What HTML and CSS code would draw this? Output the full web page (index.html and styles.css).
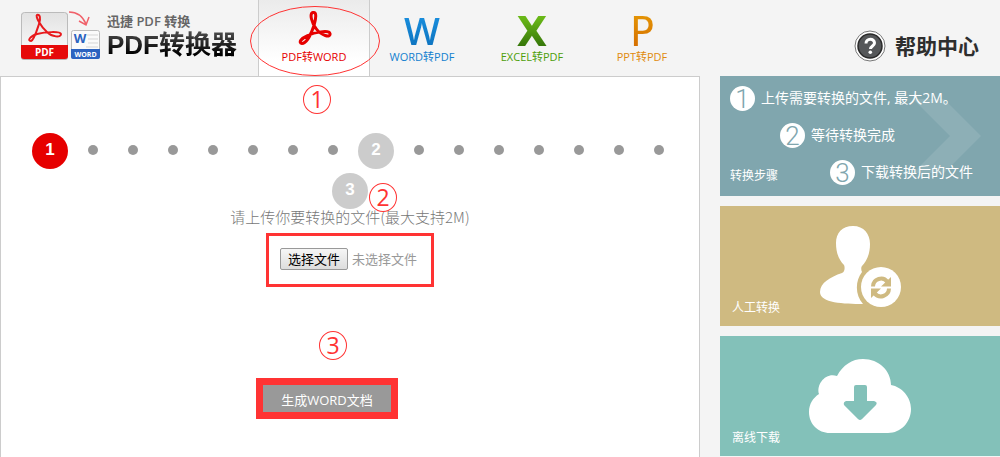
FILE: index.html
```html
<!DOCTYPE html>
<html lang="zh-CN">
<head>
    <meta charset="UTF-8">
    <meta name="viewport" content="width=device-width, initial-scale=1.0">
    <title>PDF转换器</title>
    <link rel="stylesheet" href="styles.css">
</head>
<body>
    <header class="header">
        <a class="logo" href="#">
            <svg class="logo-icon" width="82" height="52" viewBox="0 0 82 52">
                <defs>
                    <linearGradient id="paper" x1="0" y1="0" x2="0" y2="1">
                        <stop offset="0" stop-color="#e2e2e2"/>
                        <stop offset="1" stop-color="#fdfdfd"/>
                    </linearGradient>
                </defs>
                <rect x="1" y="3" width="47" height="47" rx="3" fill="#b5b5b5"/>
                <rect x="1.500" y="2.500" width="46" height="46" rx="3" fill="url(#paper)" stroke="#bbb"/>
                <path d="M1 35h47v11a3 3 0 0 1-3 3H4a3 3 0 0 1-3-3z" fill="#e60a0a"/>
                <path d="M17 5c3-1 4 3 2 9-2 6-5 16-8 17-4 0-1-5 6-7 8-2 23-3 24 0 0 4-9 3-14-2-6-5-12-16-10-17z" fill="none" stroke="#e8191c" stroke-width="2"/>
                <text x="24.500" y="46" class="logo-pdf">PDF</text>
                <path d="M49 2c8 0 14 5 17 12M59 11l7 4 3-8" fill="none" stroke="#f0616a" stroke-width="1.500"/>
                <rect x="51.500" y="20.500" width="28" height="28" rx="2" fill="#fafafa" stroke="#bbb"/>
                <path d="M67 25h11M68 29h10M68 33h10M66 37h12" stroke="#d5d5d5"/>
                <path d="M51 39h29v8a2 2 0 0 1-2 2H53a2 2 0 0 1-2-2z" fill="#2c63c0"/>
                <text x="60" y="33" class="logo-w">W</text>
                <text x="65.500" y="47" class="logo-word">WORD</text>
            </svg>
            <span class="logo-text">
                <span class="logo-small">迅捷 PDF 转换</span>
                <strong class="logo-big">PDF转换器</strong>
            </span>
        </a>
        <nav class="tabs">
            <a class="tab tab-pdf active" href="#">
                <svg class="tab-icon" width="36" height="36" viewBox="0 0 36 36">
                    <path d="M17 2.500c4-1 3 6 1 13-2 6-7 18-12 18-4-1-1-5 6-8 6-3 21-6 22-2 1 5-9 2-14-5-4-5-7-15-3-16z" fill="none" stroke="#e60000" stroke-width="3"/>
                </svg>
                <span>PDF转WORD</span>
            </a>
            <a class="tab tab-word" href="#">
                <span class="tab-letter">W</span>
                <span>WORD转PDF</span>
            </a>
            <a class="tab tab-excel" href="#">
                <span class="tab-letter">X</span>
                <span>EXCEL转PDF</span>
            </a>
            <a class="tab tab-ppt" href="#">
                <span class="tab-letter">P</span>
                <span>PPT转PDF</span>
            </a>
            <svg class="mark mark-tab" width="132" height="72" viewBox="0 0 132 72">
                <ellipse cx="66" cy="36" rx="64.500" ry="34.500"/>
            </svg>
        </nav>
        <a class="help" href="#">
            <svg width="32" height="32" viewBox="0 0 32 32">
                <circle cx="16" cy="16" r="15" fill="#fff" stroke="#777"/>
                <circle cx="16" cy="16" r="12" fill="#555759" stroke="#2a2a2a" stroke-width="1.500"/>
                <path d="M12 13.500c0-5.500 8.500-5.500 8.500-.5 0 3-4 3-4 6" fill="none" stroke="#fff" stroke-width="3"/>
                <circle cx="16.300" cy="22.300" r="1.800" fill="#fff"/>
            </svg>
            <span>帮助中心</span>
        </a>
    </header>

    <div class="content">
        <main class="panel">
            <span class="mark-num mark-one">1</span>
            <span class="mark-num mark-two">2</span>
            <span class="mark-num mark-three">3</span>

            <ol class="steps">
                <li class="step current">1</li>
                <li class="dot"></li>
                <li class="dot"></li>
                <li class="dot"></li>
                <li class="dot"></li>
                <li class="dot"></li>
                <li class="dot"></li>
                <li class="dot"></li>
                <li class="step">2</li>
                <li class="dot"></li>
                <li class="dot"></li>
                <li class="dot"></li>
                <li class="dot"></li>
                <li class="dot"></li>
                <li class="dot"></li>
                <li class="dot"></li>
                <li class="step last">3</li>
            </ol>

            <form class="upload">
                <p class="upload-tip">请上传你要转换的文件(最大支持2M)</p>
                <div class="file-box">
                    <input class="file-input" type="file" id="file">
                    <label class="file-btn" for="file">选择文件</label>
                    <span class="file-name">未选择文件</span>
                </div>
                <div class="actions">
                    <button class="submit" type="submit">生成WORD文档</button>
                </div>
            </form>
        </main>

        <aside class="sidebar">
            <section class="card card-steps">
                <svg class="chevron" width="70" height="74" viewBox="0 0 70 74">
                    <path d="M2 0h31l37 37-37 37H2l37-37z" fill="#fff" fill-opacity=".1"/>
                </svg>
                <ol class="guide">
                    <li><b>1</b>上传需要转换的文件, 最大2M。</li>
                    <li><b>2</b>等待转换完成</li>
                    <li><b>3</b>下载转换后的文件</li>
                </ol>
                <h2 class="card-label">转换步骤</h2>
            </section>
            <a class="card card-manual" href="#">
                <svg class="card-icon" width="82" height="82" viewBox="0 0 82 82">
                    <path d="M34 1c11 0 17 8 17 18 0 11-4 18-8 22-1 1-1 4 0 6-7 9-7 23 1 32C25 79 1 78 1 67c0-9 10-15 22-19 3-1 3-6 2-8-5-5-8-12-8-22C17 8 23 1 34 1z" fill="#fff"/>
                    <circle cx="62" cy="62" r="20" fill="#fff"/>
                    <path d="M54 61.500a8 8 0 0 1 14.500-4.500M70 63.500a8 8 0 0 1-14.500 4.500" fill="none" stroke="#cfba81" stroke-width="4"/>
                    <path d="M72 52v9.500H62zM52 73v-9.500h10z" fill="#cfba81"/>
                </svg>
                <span class="card-label">人工转换</span>
            </a>
            <a class="card card-offline" href="#">
                <svg class="card-icon" width="102" height="74" viewBox="0 0 102 74">
                    <path d="M21 74C9 74 0 65 0 53c0-8 4-14 10-18C7 25 17 13 28 17 34 6 43 0 54 0c16 0 28 12 28 26 11 2 20 12 20 24 0 13-10 24-23 24z" fill="#fff"/>
                    <path d="M47 26h9q2 0 2 2v14h7q4 1 2 4L53 60q-2 2-4 0L35 46q-1-3 2-4h8V28q0-2 2-2z" fill="#83c1b9"/>
                </svg>
                <span class="card-label">离线下载</span>
            </a>
        </aside>
    </div>
</body>
</html>
```

FILE: styles.css
```css
* {
    box-sizing: border-box;
}

body {
    margin: 0;
    min-height: 100vh;
    display: flex;
    flex-direction: column;
    font-family: "Open Sans", "Noto Sans CJK SC", sans-serif;
    background-color: #f4f4f4;
}

a {
    color: inherit;
    text-decoration: none;
}

/* header */
.header {
    display: flex;
    height: 76px;
}

.logo {
    display: flex;
    width: 258px;
    padding: 10px 0 0 20px;
}

.logo-icon {
    flex: none;
}

.logo-icon text {
    font-weight: bold;
    text-anchor: middle;
}

.logo-pdf {
    font-size: 10px;
    fill: #fff;
}

.logo-w {
    font-size: 13px;
    fill: #2c63c0;
}

.logo-word {
    font-size: 7px;
    fill: #fff;
}

.logo-text {
    display: flex;
    flex-direction: column;
    padding: 4px 0 0 5px;
    white-space: nowrap;
}

.logo-small {
    font-size: 13px;
    font-weight: 600;
    line-height: 15px;
    color: #666;
}

.logo-big {
    font-family: "Liberation Sans", "Noto Sans CJK SC", sans-serif;
    font-size: 26px;
    font-weight: bold;
    line-height: 32px;
    color: transparent;
    background: linear-gradient(#555, #000 80%);
    background-clip: text;
    -webkit-background-clip: text;
}

.tabs {
    position: relative;
    display: flex;
}

.tab {
    display: flex;
    flex-direction: column;
    align-items: center;
    width: 110px;
    padding-top: 10px;
    font-size: 11px;
    line-height: 16px;
}

.tab.active {
    width: 112px;
    margin-right: -3px;
    border: 1px solid #ccc;
    border-width: 0 1px;
    background: linear-gradient(#ebebeb, #fff 80%);
}

.tab-icon {
    margin-bottom: 3px;
}

.tab-letter {
    height: 39px;
    font-size: 38px;
    line-height: 40px;
    color: transparent;
    background-clip: text;
    -webkit-background-clip: text;
}

.tab-pdf {
    color: #e60000;
}

.tab-word {
    color: #1380cf;
}

.tab-word .tab-letter {
    font-weight: 600;
    background-image: linear-gradient(#1b93e3, #0d72bd);
}

.tab-excel {
    color: #4d9e09;
}

.tab-excel .tab-letter {
    font-family: "DejaVu Sans", sans-serif;
    font-size: 40px;
    font-weight: bold;
    line-height: 44px;
    background-image: linear-gradient(#69b817 20%, #37780a 90%);
}

.tab-ppt {
    color: #e08a0c;
}

.tab-ppt .tab-letter {
    font-family: "DejaVu Sans", sans-serif;
    font-size: 40px;
    line-height: 44px;
    background-image: linear-gradient(#e69a05, #d46c00);
}

.help {
    display: flex;
    align-items: center;
    gap: 9px;
    margin-left: auto;
    padding: 16px 21px 0 0;
    font-size: 21px;
    font-weight: bold;
    line-height: 28px;
    color: #2e2e2e;
}

/* red pen marks */
.mark {
    position: absolute;
    fill: none;
    stroke: #f33;
}

.mark-tab {
    top: 5px;
    left: -9px;
}

.mark-num {
    position: absolute;
    width: 28px;
    height: 29px;
    border: 1px solid #f33;
    border-radius: 50%;
    font-size: 23px;
    line-height: 27px;
    text-align: center;
    color: #f33;
}

.mark-one {
    top: 8px;
    left: 302px;
}

.mark-two {
    top: 106px;
    left: 368px;
}

.mark-three {
    top: 254px;
    left: 318px;
}

/* content */
.content {
    display: flex;
    flex: 1;
    gap: 20px;
}

.panel {
    position: relative;
    flex: 1;
    padding-top: 54px;
    border: 1px solid #ccc;
    border-bottom: 0;
    background: #fff;
}

.steps {
    display: flex;
    flex-wrap: wrap;
    align-items: center;
    margin: 0;
    padding: 0;
    list-style: none;
}

.step {
    width: 36px;
    height: 36px;
    margin: 2px 5px;
    border-radius: 50%;
    background: #ccc;
    color: #fff;
    font-family: "Liberation Sans", sans-serif;
    font-size: 17px;
    font-weight: bold;
    line-height: 34px;
    text-align: center;
}

.step.current {
    margin-left: 31px;
    background: #e60000;
}

.step.last {
    margin: 2px auto;
}

.dot {
    width: 10px;
    height: 10px;
    margin: 0 15px 3px;
    border-radius: 50%;
    background: #999;
}

.upload {
    display: flex;
    flex-direction: column;
    align-items: center;
    font-family: "Noto Sans CJK SC", sans-serif;
    font-size: 13px;
}

.upload-tip {
    margin: 0 0 10px;
    font-size: 15px;
    font-weight: 300;
    line-height: 12px;
    color: #777;
}

.file-box {
    display: flex;
    align-items: center;
    gap: 4px;
    padding: 12px 14px 14px 11px;
    border: 3px solid #f33;
    color: #999;
}

.file-input {
    position: absolute;
    width: 1px;
    height: 1px;
    opacity: 0;
}

.file-btn {
    padding: 0 7px;
    border: 1px solid #999;
    border-radius: 2px;
    background: linear-gradient(#f6f6f6, #ddd);
    line-height: 20px;
    color: #000;
}

.file-name {
    line-height: 20px;
}

.actions {
    margin-top: 91px;
    padding-right: 46px;
}

.submit {
    width: 142px;
    height: 41px;
    padding: 2px 0 0;
    border: 7px solid #f33;
    background: #999;
    color: #fff;
    font-family: "Open Sans", "Noto Sans CJK SC", sans-serif;
    font-size: 13px;
    line-height: 20px;
}

/* sidebar */
.sidebar {
    display: flex;
    flex-direction: column;
    flex: none;
    gap: 10px;
    width: 280px;
}

.card {
    display: grid;
    height: 120px;
    color: #fff;
}

.card > * {
    grid-area: 1 / 1;
}

.card-steps {
    background: #80a6ae;
}

.card-manual {
    background: #cfba81;
}

.card-offline {
    background: #83c1b9;
}

.card-icon {
    place-self: center;
}

.card-label {
    align-self: end;
    margin: 0;
    padding: 0 0 9px 12px;
    font-size: 12px;
    font-weight: normal;
    line-height: 18px;
}

.card-steps .card-label {
    padding: 0 0 11px 10px;
}

.chevron {
    place-self: center end;
    margin-right: 19px;
}

.guide {
    display: flex;
    flex-direction: column;
    gap: 12px;
    margin: 0;
    padding: 10px 0 0 10px;
    list-style: none;
    font-size: 14px;
    line-height: 24px;
    white-space: nowrap;
}

.guide li {
    display: flex;
    gap: 6px;
    height: 25px;
}

.guide li:nth-child(2) {
    margin-left: 50px;
}

.guide li:nth-child(3) {
    margin-left: 100px;
}

.guide b {
    width: 25px;
    height: 25px;
    border-radius: 50%;
    background: #fff;
    color: #80a6ae;
    font-family: Roboto, sans-serif;
    font-size: 26px;
    font-weight: 300;
    line-height: 26px;
    text-align: center;
}
```
